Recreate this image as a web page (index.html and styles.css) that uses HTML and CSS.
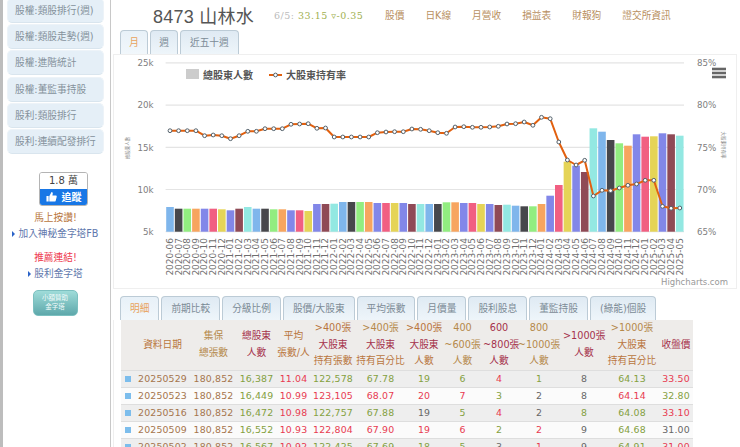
FILE: index.html
```html
<!DOCTYPE html>
<html lang="zh-Hant">
<head>
<meta charset="utf-8">
<title>8473 山林水</title>
<link rel="stylesheet" href="styles.css">
</head>
<body>
<div class="page">
  <aside class="side">
    <a class="side-btn">股權:類股排行(週)</a>
    <a class="side-btn">股權:類股走勢(週)</a>
    <a class="side-btn">股權:進階統計</a>
    <a class="side-btn">股權:董監事持股</a>
    <a class="side-btn">股利:類股排行</a>
    <a class="side-btn">股利:連續配發排行</a>
    <div class="like">
      <div class="like-count">1.8 萬</div>
      <div class="like-btn">
        <svg class="thumb" viewBox="0 0 12 12"><path d="M0.5 5.5h2.4v6H0.5zM3.6 5.6 6 1c1.1 0 1.6.8 1.4 1.8L7 4.8h3.6c.9 0 1.3.7 1.1 1.4l-1.1 4.3c-.2.6-.6 1-1.3 1H3.6z" fill="#fff"/></svg>
        <span>追蹤</span>
      </div>
    </div>
    <div class="promo promo-brown">馬上按讚!</div>
    <a class="side-link"><i class="arrow"></i>加入神秘金字塔FB</a>
    <div class="promo promo-red">推薦連結!</div>
    <a class="side-link"><i class="arrow"></i>股利金字塔</a>
    <a class="donate">小額贊助<br>金字塔</a>
  </aside>
  <main class="main">
    <header class="head">
      <h1 class="title">8473 山林水</h1>
      <div class="quote"><span class="q-date">6/5:</span> <span class="q-val">33.15 ▿-0.35</span></div>
      <nav class="nav">
        <a>股價</a><a>日K線</a><a>月營收</a><a>損益表</a><a>財報狗</a><a>證交所資訊</a>
      </nav>
    </header>
    <div class="tabs tabs-chart">
      <a class="tab active">月</a><a class="tab">週</a><a class="tab">近五十週</a>
    </div>
    <section class="chart-panel" id="chart"></section>
    <div class="tabs tabs-table">
      <a class="tab active">明細</a><a class="tab">前期比較</a><a class="tab">分級比例</a><a class="tab">股價/大股東</a><a class="tab">平均張數</a><a class="tab">月價量</a><a class="tab">股利股息</a><a class="tab">董監持股</a><a class="tab">(綠能)個股</a>
    </div>
    <section class="table-panel">
      <table class="grid">
        <colgroup>
          <col class="c-mark"><col class="c-date"><col class="c-a"><col class="c-b"><col class="c-c"><col class="c-d"><col class="c-e"><col class="c-f"><col class="c-g"><col class="c-h"><col class="c-i"><col class="c-j"><col class="c-k"><col class="c-l">
        </colgroup>
        <thead>
          <tr>
            <th></th>
            <th class="h-br">資料日期</th>
            <th class="h-tan">集保<br>總張數</th>
            <th class="h-mar">總股東<br>人數</th>
            <th class="h-br">平均<br>張數/人</th>
            <th class="h-br">&gt;400張<br><span class="h-mar">大股東</span><br>持有張數</th>
            <th class="h-tan">&gt;400張<br><span class="h-mar">大股東</span><br><span class="h-br">持有百分比</span></th>
            <th class="h-br">&gt;400張<br><span class="h-mar">大股東</span><br>人數</th>
            <th class="h-tan">400<br>~600張<br>人數</th>
            <th class="h-mar">600<br>~800張<br>人數</th>
            <th class="h-tan">800<br>~1000張<br>人數</th>
            <th class="h-mar">&gt;1000張<br>人數</th>
            <th class="h-tan">&gt;1000張<br><span class="h-br">大股東</span><br><span class="h-br">持有百分比</span></th>
            <th class="h-mar">收盤價</th>
          </tr>
        </thead>
        <tbody>
          <tr><td><i class="mark"></i></td><td class="date">20250529</td><td class="date">180,852</td><td class="g">16,387</td><td class="r">11.04</td><td class="g">122,578</td><td class="g">67.78</td><td class="g">19</td><td class="g">6</td><td class="r">4</td><td class="g">1</td><td class="n">8</td><td class="g">64.13</td><td class="r">33.50</td></tr>
          <tr><td><i class="mark"></i></td><td class="date">20250523</td><td class="date">180,852</td><td class="g">16,449</td><td class="r">10.99</td><td class="r">123,105</td><td class="r">68.07</td><td class="r">20</td><td class="r">7</td><td class="g">3</td><td class="n">2</td><td class="n">8</td><td class="r">64.14</td><td class="g">32.80</td></tr>
          <tr><td><i class="mark"></i></td><td class="date">20250516</td><td class="date">180,852</td><td class="g">16,472</td><td class="r">10.98</td><td class="g">122,757</td><td class="g">67.88</td><td class="n">19</td><td class="g">5</td><td class="r">4</td><td class="n">2</td><td class="g">8</td><td class="g">64.08</td><td class="r">33.10</td></tr>
          <tr><td><i class="mark"></i></td><td class="date">20250509</td><td class="date">180,852</td><td class="g">16,552</td><td class="r">10.93</td><td class="r">122,804</td><td class="r">67.90</td><td class="r">19</td><td class="r">6</td><td class="g">2</td><td class="r">2</td><td class="n">9</td><td class="g">64.68</td><td class="n">31.00</td></tr>
          <tr><td><i class="mark"></i></td><td class="date">20250502</td><td class="date">180,852</td><td class="g">16,567</td><td class="r">10.92</td><td class="g">122,425</td><td class="g">67.69</td><td class="g">18</td><td class="g">5</td><td class="n">3</td><td class="r">1</td><td class="n">9</td><td class="g">64.91</td><td class="r">31.00</td></tr>
        </tbody>
      </table>
    </section>
  </main>
</div>
<script src="chart.js"></script>
</body>
</html>
```
FILE: styles.css
```css
* { box-sizing: border-box; }
html, body { margin: 0; padding: 0; height: 447px; overflow: hidden; background: #fff; }
body { font-family: "DejaVu Sans", "Noto Sans CJK TC", sans-serif; font-size: 9.7px; color: #666; }
a { text-decoration: none; }
.page { display: flex; width: 740px; height: 447px; overflow: hidden; }

/* sidebar */
.side { flex: 0 0 111px; height: 447px; border-left: 3px solid #bdbdbd; border-right: 1px solid #c8c8c8; padding: 0 6px 0 4px; display: flex; flex-direction: column; align-items: stretch; overflow: hidden; }
.side-btn { flex: 0 0 25px; margin-bottom: 1.2px; line-height: 23px; padding-left: 7px; color: #84919b; background: #e5eff7; border: 1px solid #edf3f8; border-bottom-color: #d9e5ee; border-radius: 5px; white-space: nowrap; }
.side-btn:first-child { margin-top: -2px; }
.like { flex: none; align-self: center; width: 49px; margin: 16.5px 0 0 16px; border-radius: 3px; overflow: hidden; border: 1px solid #b4b4b4; }
.like-count { height: 16px; line-height: 16px; text-align: center; color: #444; background: #fff; font-size: 10px; }
.like-btn { height: 16px; background: #1877e6; color: #fff; font-weight: bold; font-size: 10px; display: flex; align-items: center; justify-content: center; gap: 5px; }
.thumb { width: 11px; height: 11px; }
.promo { flex: none; text-align: center; line-height: 16px; margin-right: 0; }
.promo-brown { color: #b8763c; margin-top: 4px; }
.promo-red { color: #ee3a50; margin-top: 8px; }
.side-link { flex: none; color: #5f78ad; line-height: 16px; text-align: center; white-space: nowrap; }
.arrow { display: inline-block; width: 0; height: 0; border-left: 3px solid #2a63c8; border-top: 3px solid transparent; border-bottom: 3px solid transparent; margin-right: 3px; vertical-align: 0; }
.donate { flex: none; align-self: center; width: 45px; height: 26px; margin: 8px 0 0 -1px; padding-top: 3px; border-radius: 5px; background: linear-gradient(#9fdcd9, #5ea8ab); border: 1px solid #7cc0c0; color: #f2fbfb; font-size: 6.5px; line-height: 9.5px; text-align: center; }

/* main */
.main { flex: 1; min-width: 0; height: 447px; padding-left: 2px; display: flex; flex-direction: column; overflow: hidden; }
.head { flex: none; height: 30px; display: flex; align-items: center; padding-left: 40px; }
.title { margin: 0; width: 121px; font-family: "Liberation Sans", "Noto Sans CJK TC", sans-serif; font-weight: normal; font-size: 18px; letter-spacing: .25px; color: #555; white-space: nowrap; }
.quote { width: 111px; font-family: "DejaVu Serif", "Noto Sans CJK TC", serif; font-size: 9.5px; letter-spacing: .5px; white-space: nowrap; }
.q-date { color: #bbb; }
.q-val { color: #9fb050; }
.nav { display: flex; gap: 21px; }
.nav a { color: #b9905f; white-space: nowrap; }

.tabs { display: flex; gap: 2px; padding-left: 7px; height: 24px; flex: none; }
.tab { height: 24px; padding: 0 9px; line-height: 23px; color: #7c8b96; background: linear-gradient(#dfeaf3, #eef5fa); border: 1px solid #bccbd6; border-bottom: 0; border-radius: 4px 4px 0 0; white-space: nowrap; }
.tabs-chart .tab:first-child { width: 28px; text-align: center; padding: 0; }
.tabs-chart .tab:nth-child(2) { width: 28px; text-align: center; padding: 0; }
.tab.active { color: #e8a35c; background: linear-gradient(#e8f1f8, #f1f7fb); }

.chart-panel { height: 235px; width: 624px; flex: none; border: 1px solid #efefef; background: #fff; }
.chart-svg { display: block; width: 622px; height: 233px; }
.chart-svg text { font-family: "DejaVu Sans", "Noto Sans CJK TC", sans-serif; }
.grid-line { stroke: #e4e4e4; stroke-width: 1.2; }
.axis-y { font-size: 8.7px; fill: #808080; }
.axis-x { font-size: 9px; fill: #6e6e6e; }
.axis-title { font-size: 4.5px; fill: #888; }
.legend { font-size: 10px; font-weight: bold; fill: #555; }
.credit { font-size: 8.5px; fill: #999; }
.menu-bar { fill: #666; }
.bar { opacity: .98; }
.rate-line { fill: none; stroke: #e2600f; stroke-width: 2; stroke-linejoin: round; }
.rate-dot { fill: #fff; stroke: #52606a; stroke-width: 1; }

.tabs-table { margin-top: 7px; }
.table-panel { flex: 1; min-height: 0; padding-left: 7px; border-left: 1px solid #efefef; }
.grid { table-layout: fixed; width: 572px; border-collapse: collapse; }
.c-mark { width: 14px; } .c-date { width: 55px; } .c-a { width: 47px; } .c-b { width: 39px; } .c-c { width: 35px; } .c-d { width: 44px; } .c-e { width: 51px; } .c-f { width: 36px; } .c-g { width: 41px; } .c-h { width: 32px; } .c-i { width: 48px; } .c-j { width: 42px; } .c-k { width: 54px; } .c-l { width: 34px; }
.grid th { height: 50px; padding: 0; background: #eeecea; font-weight: normal; line-height: 16.3px; white-space: nowrap; text-align: center; overflow: visible; }
.grid td { height: 17px; padding: 0; line-height: 16px; letter-spacing: .15px; text-align: center; border-top: 1px solid #dedede; white-space: nowrap; font-size: 9.4px; }
.grid tbody tr:nth-child(odd) td { background: #eeeeee; }
.grid tbody tr:nth-child(even) td { background: #fbfbfb; }
.mark { display: inline-block; width: 6px; height: 6px; background: #7cbdec; }
.h-br { color: #b9763e; }
.h-tan { color: #b5894a; }
.h-mar { color: #a5314a; }
.date { color: #a5754c; }
.g { color: #84a03e; }
.r { color: #e83a50; }
.n { color: #666; }
```
FILE: chart.js
```js
(function () {
  var NS = 'http://www.w3.org/2000/svg';
  var colors = ['#7cb5ec','#434348','#90ed7d','#f7a35c','#8085e9','#f15c80','#e4d354','#8085e8','#8d4653','#91e8e1'];
  var labels = [];
  for (var y = 2020, m = 6; labels.length < 60; ) {
    labels.push(y + '-' + (m < 10 ? '0' : '') + m);
    if (++m > 12) { m = 1; y++; }
  }
  var barTop = [207,208.7,208.7,208.7,208.7,208.7,209.3,210.3,208.7,207,208.7,208.7,209.3,209.3,210.3,210.3,211,204,204,203.7,202,202,202,202,
    203,203,203,203,204,204,204,204,202.3,202.3,203,203,204,204,205,204.7,205.7,206.3,206.3,204,195.7,185,161.7,165.7,172,
    128.3,131.7,140,143.3,145.7,134.3,136.7,136.3,133.3,134.3,135.7];
  var lineY = [130.7,130.7,130.7,130.7,135.7,135,135.7,138.7,135.7,131.3,131.3,128.7,128.7,128.7,124.3,124,123.7,128.3,128,137,137,137,137,137,
    132.7,132,131.7,131.7,129,129.3,130.7,132.7,133.3,127,126.7,127.3,127.3,127,126.3,124,123.7,122,125.3,117.3,118.7,142,
    160,165,160.3,196,190.3,190.7,188,185.3,184,180.3,180.3,206.3,208.3,208];
  var X0 = 165.6, STEP = 8.64, BASE = 231.7;

  function el(name, attrs, text, parent) {
    var e = document.createElementNS(NS, name);
    for (var k in attrs) e.setAttribute(k, attrs[k]);
    if (text != null) e.textContent = text;
    (parent || svg).appendChild(e);
    return e;
  }
  var svg = document.createElementNS(NS, 'svg');
  svg.setAttribute('class', 'chart-svg');
  svg.setAttribute('viewBox', '114 55 622 233');
  document.getElementById('chart').appendChild(svg);

  var left = ['25k','20k','15k','10k','5k'], right = ['85%','80%','75%','70%','65%'];
  left.forEach(function (t, i) {
    var gy = 62.9 + i * 42.2;
    el('line', { x1: X0, x2: 684, y1: gy, y2: gy, 'class': 'grid-line' });
    el('text', { x: 153.5, y: gy + 3.2, 'text-anchor': 'end', 'class': 'axis-y' }, t);
    el('text', { x: 697, y: gy + 3.2, 'class': 'axis-y' }, right[i]);
  });

  barTop.forEach(function (top, i) {
    var x = X0 + i * STEP;
    el('rect', { x: x + 0.6, y: top, width: 7.6, height: BASE - top, fill: colors[i % 10], 'class': 'bar' });
    var cx = x + 4.32 + 3;
    el('text', { x: cx, y: 238, transform: 'rotate(-90 ' + cx + ' 238)', 'text-anchor': 'end', 'class': 'axis-x' }, labels[i]);
  });

  var pts = lineY.map(function (v, i) { return (X0 + i * STEP + 4.4).toFixed(1) + ',' + v; });
  el('polyline', { points: pts.join(' '), 'class': 'rate-line' });
  pts.forEach(function (p) {
    var c = p.split(',');
    el('circle', { cx: c[0], cy: c[1], r: 1.9, 'class': 'rate-dot' });
  });

  el('text', { x: 129, y: 148, transform: 'rotate(-90 129 148)', 'text-anchor': 'middle', 'class': 'axis-title' }, '總股東人數');
  el('text', { x: 722, y: 145, transform: 'rotate(90 722 145)', 'text-anchor': 'middle', 'class': 'axis-title' }, '大股東持有率');

  el('rect', { x: 186, y: 69, width: 13, height: 10, fill: '#cccccc' });
  el('text', { x: 203, y: 78.5, 'class': 'legend' }, '總股東人數');
  el('line', { x1: 269, x2: 282, y1: 75, y2: 75, stroke: '#e2600f', 'stroke-width': 2 });
  el('circle', { cx: 275.5, cy: 75, r: 1.9, 'class': 'rate-dot' });
  el('text', { x: 286, y: 78.5, 'class': 'legend' }, '大股東持有率');

  [67.7, 71.7, 75.7].forEach(function (my) {
    el('rect', { x: 712, y: my, width: 14, height: 2.6, 'class': 'menu-bar' });
  });
  el('text', { x: 728, y: 285, 'text-anchor': 'end', 'class': 'credit' }, 'Highcharts.com');
})();
```
